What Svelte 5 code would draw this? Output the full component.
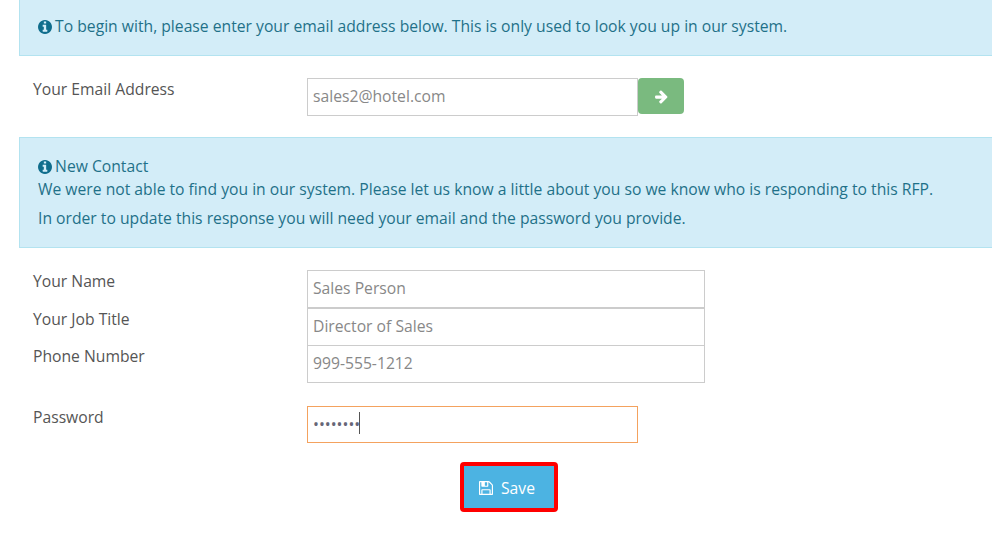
<script>
  const infoPath = "M1024 1376v-160q0-14-9-23t-23-9h-96v-512q0-14-9-23t-23-9h-320q-14 0-23 9t-9 23v160q0 14 9 23t23 9h96v320h-96q-14 0-23 9t-9 23v160q0 14 9 23t23 9h448q14 0 23-9t9-23zm-128-896v-160q0-14-9-23t-23-9h-192q-14 0-23 9t-9 23v160q0 14 9 23t23 9h192q14 0 23-9t9-23zm640 416q0 209-103 385.500t-279.500 279.500-385.500 103-385.500-103-279.500-279.500-103-385.500 103-385.500 279.500-279.500 385.500-103 385.500 103 279.500 279.500 103 385.500z";

  const contactFields = [
    { label: "Your Name", value: "Sales Person" },
    { label: "Your Job Title", value: "Director of Sales" },
    { label: "Phone Number", value: "999-555-1212" },
  ];
</script>

<div class="page">
  <div class="alert first">
    <svg class="info" viewBox="0 128 1536 1536"><path d={infoPath} /></svg>
    To begin with, please enter your email address below. This is only used to look you up in our system.
  </div>

  <div class="row email-row">
    <label class="lbl" for="email">Your Email Address</label>
    <div class="email-group">
      <input id="email" class="field short" type="text" value="sales2@hotel.com" readonly />
      <button class="go" type="button" aria-label="Next">
        <svg viewBox="0 0 1792 1792" width="15" height="15"><path fill="#fff" d="M1600 960q0 54-37 91l-651 651q-39 37-91 37-51 0-90-37l-75-75q-38-38-38-91t38-91l293-293h-704q-52 0-84.500-37.500t-32.500-90.500v-128q0-53 32.500-90.500t84.500-37.500h704l-293-294q-38-36-38-90t38-90l75-75q38-38 90-38 53 0 91 38l651 651q37 35 37 90z" /></svg>
      </button>
    </div>
  </div>

  <div class="alert second">
    <div class="heading">
      <svg class="info" viewBox="0 128 1536 1536"><path d={infoPath} /></svg>
      New Contact
    </div>
    <p class="line">We were not able to find you in our system. Please let us know a little about you so we know who is responding to this RFP.</p>
    <p class="line">In order to update this response you will need your email and the password you provide.</p>
  </div>

  <div class="contact">
    {#each contactFields as f}
      <div class="row contact-row">
        <span class="lbl">{f.label}</span>
        <input class="field long" type="text" value={f.value} readonly />
      </div>
    {/each}
  </div>

  <div class="row password-row">
    <span class="lbl">Password</span>
    <div class="pw-wrap">
      <input class="field short focused" type="password" value="password" readonly />
      <span class="caret"></span>
    </div>
  </div>

  <div class="actions">
    <button class="save" type="button">
      <svg viewBox="128 128 1536 1536" width="14" height="14"><path fill="#fff" d="M512 1536h768v-384h-768v384zm896 0h128v-896q0-14-10-38.500t-20-34.500l-281-281q-10-10-34-20t-39-10v416q0 40-28 68t-68 28h-576q-40 0-68-28t-28-68v-416h-128v1280h128v-416q0-40 28-68t68-28h832q40 0 68 28t28 68v416zm-384-928v-320q0-13-9.500-22.500t-22.500-9.500h-192q-13 0-22.500 9.500t-9.500 22.500v320q0 13 9.500 22.500t22.500 9.500h192q13 0 22.500-9.500t9.500-22.500zm640 32v928q0 40-28 68t-68 28h-1344q-40 0-68-28t-28-68v-1344q0-40 28-68t68-28h928q40 0 88 20t76 48l280 280q28 28 48 76t20 88z" /></svg>
      Save
    </button>
  </div>
</div>

<style>
  :global(body) {
    margin: 0;
    background: #fff;
    overflow: hidden;
  }

  .page {
    width: 992px;
    height: 535px;
    overflow: hidden;
    font-family: "Open Sans", sans-serif;
    font-size: 15.7px;
    color: #555;
    padding-left: 19px;
    box-sizing: border-box;
  }

  .alert {
    background: #d3edf8;
    border: 1px solid #b3e3f0;
    border-right: none;
    color: #1f7189;
    padding-left: 18px;
    box-sizing: border-box;
    line-height: 22px;
  }

  .first {
    height: 56px;
    border-top: none;
    padding-top: 15px;
  }

  .second {
    height: 111px;
    margin-top: 21px;
    padding-top: 17px;
  }

  .heading {
    height: 23px;
  }

  .line {
    margin: 0 0 7px;
  }

  .info {
    width: 14px;
    height: 14px;
    fill: #0f6d8c;
    vertical-align: -2px;
    margin-right: -1px;
  }

  .row {
    display: grid;
    grid-template-columns: 288px 1fr;
  }

  .lbl {
    padding-left: 14px;
    line-height: 22px;
  }

  .email-row {
    margin-top: 22px;
    height: 38px;
  }

  .email-group {
    display: flex;
    align-items: flex-start;
  }

  .field {
    height: 38px;
    box-sizing: border-box;
    border: 1px solid #ccc;
    border-radius: 0;
    padding: 0 5px 2px;
    font-family: inherit;
    font-size: 15.7px;
    color: #888;
    background: #fff;
    outline: none;
    display: block;
  }

  .short {
    width: 331px;
  }

  .long {
    width: 398px;
  }

  .go {
    width: 46px;
    height: 36px;
    border: none;
    border-radius: 4px;
    background: #7aba7f;
    display: flex;
    align-items: center;
    justify-content: center;
    padding: 0;
  }

  .contact {
    margin-top: 22px;
  }

  .contact-row {
    height: 37.500px;
  }

  .password-row {
    margin-top: 23px;
  }

  .pw-wrap {
    position: relative;
    width: 331px;
  }

  .focused {
    height: 37px;
    border-color: #f4a25e;
    color: #667;
    padding-bottom: 1px;
  }

  .caret {
    position: absolute;
    left: 52px;
    top: 6px;
    width: 1px;
    height: 22px;
    background: #555;
  }

  .actions {
    margin-top: 19px;
    padding-left: 441px;
  }

  .save {
    width: 98px;
    height: 50px;
    box-sizing: border-box;
    border: 4px solid #f00;
    border-radius: 4px;
    background: #4cb3e2;
    color: #fff;
    font-family: inherit;
    font-size: 15.7px;
    display: flex;
    align-items: center;
    justify-content: center;
    gap: 8px;
    padding: 2px 4px 0 0;
  }
</style>
